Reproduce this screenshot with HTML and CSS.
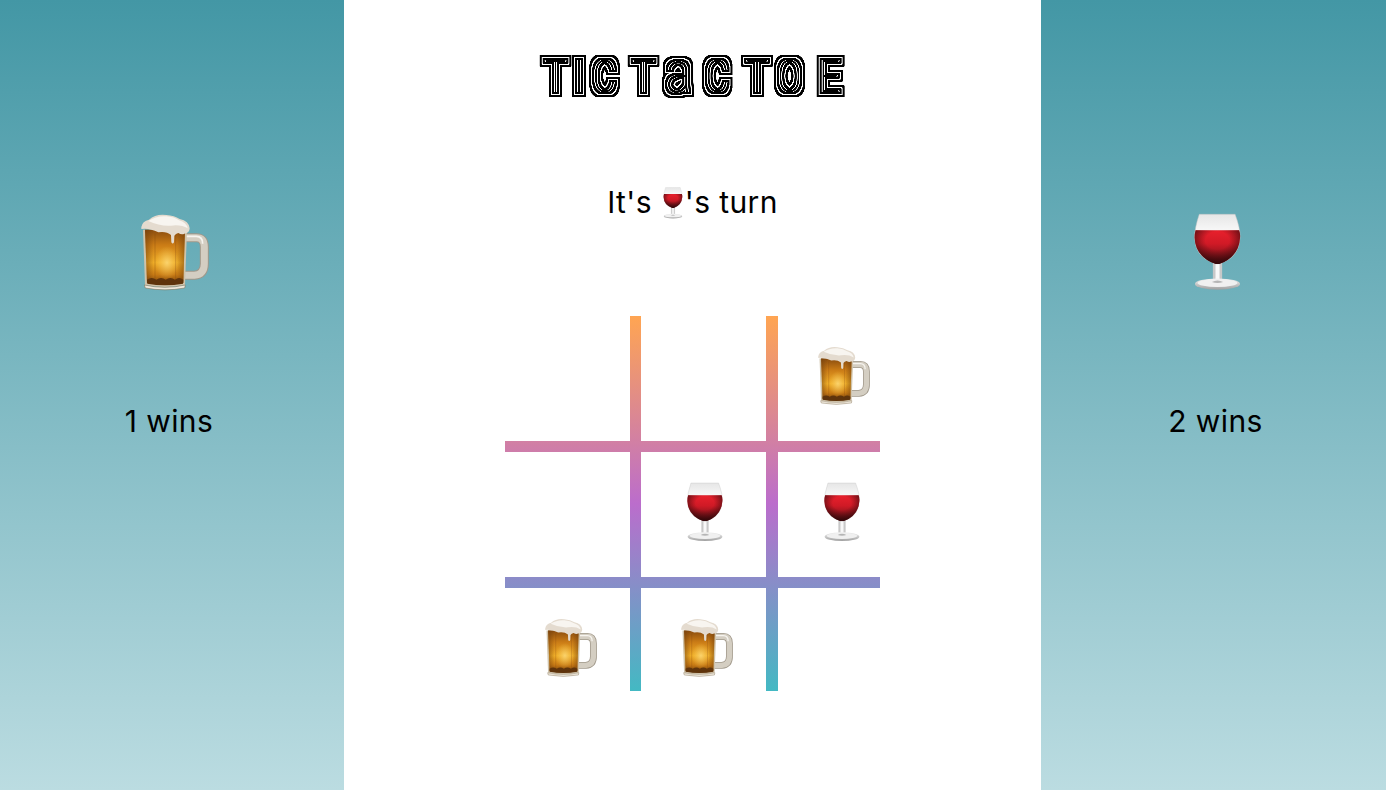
FILE: index.html
```html
<!DOCTYPE html>
<html lang="en">
<head>
    <meta charset="UTF-8">
    <meta name="viewport" content="width=device-width, initial-scale=1.0">
    <title>Tic Tac Toe</title>
    <link rel="stylesheet" href="styles.css">
</head>
<body>

<svg class="defs" width="0" height="0" aria-hidden="true">
    <defs>
        <linearGradient id="beer-fill" x1="0" y1="0" x2="0" y2="1">
            <stop offset="0" stop-color="#8a4c0e"/>
            <stop offset="0.28" stop-color="#cb7c16"/>
            <stop offset="0.6" stop-color="#f0ae28"/>
            <stop offset="0.82" stop-color="#c87a14"/>
            <stop offset="1" stop-color="#6e3c0c"/>
        </linearGradient>
        <radialGradient id="beer-glow" cx="0.55" cy="0.6" r="0.3">
            <stop offset="0" stop-color="#ffe38a" stop-opacity="0.7"/>
            <stop offset="1" stop-color="#ffd25a" stop-opacity="0"/>
        </radialGradient>
        <linearGradient id="beer-side" x1="0" y1="0" x2="1" y2="0">
            <stop offset="0" stop-color="#6d3c0c" stop-opacity="0.55"/>
            <stop offset="0.22" stop-color="#6d3c0c" stop-opacity="0"/>
            <stop offset="0.78" stop-color="#6d3c0c" stop-opacity="0"/>
            <stop offset="1" stop-color="#6d3c0c" stop-opacity="0.55"/>
        </linearGradient>
        <linearGradient id="wine-fill" x1="0" y1="0" x2="0" y2="1">
            <stop offset="0" stop-color="#e8202c"/>
            <stop offset="0.4" stop-color="#d01a26"/>
            <stop offset="1" stop-color="#5e1015"/>
        </linearGradient>
        <radialGradient id="wine-edge" cx="0.5" cy="0.3" r="0.65">
            <stop offset="0.4" stop-color="#400a0e" stop-opacity="0"/>
            <stop offset="1" stop-color="#300709" stop-opacity="0.9"/>
        </radialGradient>
        <linearGradient id="glass-top" x1="0" y1="0" x2="0" y2="1">
            <stop offset="0" stop-color="#e6e6e6"/>
            <stop offset="0.3" stop-color="#fbfbfb"/>
            <stop offset="0.6" stop-color="#dcdcdc"/>
        </linearGradient>
        <linearGradient id="glass-foot" x1="0" y1="0" x2="0" y2="1">
            <stop offset="0" stop-color="#f2f2f2"/>
            <stop offset="1" stop-color="#a0a0a0"/>
        </linearGradient>

        <filter id="rings" x="-5%" y="-30%" width="110%" height="160%" color-interpolation-filters="sRGB">
            <feComponentTransfer in="SourceAlpha" result="core">
                <feFuncA type="linear" slope="4"/>
            </feComponentTransfer>
            <feMorphology in="core" operator="dilate" radius="6 5" result="a"/>
            <feMorphology in="core" operator="dilate" radius="4 3" result="b"/>
            <feMorphology in="core" operator="dilate" radius="3 2" result="c"/>
            <feMorphology in="core" operator="dilate" radius="1 0" result="d"/>
            <feComposite in="a" in2="b" operator="out" result="outer"/>
            <feComposite in="c" in2="d" operator="out" result="inner"/>
            <feMerge>
                <feMergeNode in="outer"/>
                <feMergeNode in="inner"/>
                <feMergeNode in="core"/>
            </feMerge>
        </filter>

        <symbol id="beer" viewBox="60 40 204 230">
            <path d="M188 112H226Q250 112 250 140V190Q250 222 220 225H188" fill="none" stroke="#a0988a" stroke-width="27"/>
            <path d="M188 112H226Q250 112 250 140V190Q250 222 220 225H188" fill="none" stroke="#d4cec2" stroke-width="21"/>
            <path d="M192 108H226Q245 108 245 130" fill="none" stroke="#f6f4ef" stroke-width="5"/>
            <path d="M66 88H198L192 254Q132 266 72 254Z" fill="#cfc3ab"/>
            <path d="M72 88H192L187 248Q132 258 78 248Z" fill="url(#beer-fill)"/>
            <path d="M72 88H192L187 248Q132 258 78 248Z" fill="url(#beer-glow)"/>
            <path d="M72 88H192L187 248Q132 258 78 248Z" fill="url(#beer-side)"/>
            <path d="M102 100V240M164 100V240" stroke="#7a4310" stroke-opacity="0.3" stroke-width="3"/>
            <path d="M78 238Q92 228 106 238Q120 228 134 238Q148 228 162 238Q174 228 187 238L186 250Q132 260 79 250Z" fill="#5f340c"/>
            <path d="M70 254Q132 268 193 254L191 263Q132 274 73 263Z" fill="#efe9dd" stroke="#7c6a4c" stroke-width="1.5"/>
            <path d="M61 80Q64 62 84 58Q104 40 136 44Q160 46 176 56Q204 62 206 84Q206 98 190 100Q182 104 172 98Q164 100 160 106L159 126Q155 133 151 126L150 104Q136 92 112 96Q84 82 61 86Z" fill="#e4dbcf"/>
            <path d="M82 62Q106 46 136 48Q160 50 174 60Q196 66 200 84Q180 72 150 76Q116 78 82 62Z" fill="#f8f5f0"/>
        </symbol>

        <symbol id="wine" viewBox="75 38 140 235">
            <path d="M90 42H198Q214 84 213 112Q210 170 158 188V240H132V188Q78 170 76 112Q76 84 90 42Z" fill="url(#glass-top)" stroke="#c4c4c4" stroke-width="1.5"/>
            <path d="M79 90H210Q214 100 213 112Q210 170 150 192H140Q78 170 76 112Q76 100 79 90Z" fill="url(#wine-fill)"/>
            <path d="M79 90H210Q214 100 213 112Q210 170 150 192H140Q78 170 76 112Q76 100 79 90Z" fill="url(#wine-edge)"/>
            <path d="M132 192H158V240H132Z" fill="#c8c8c8"/>
            <path d="M139 192H151V240H139Z" fill="#f8f8f8"/>
            <ellipse cx="145" cy="252" rx="68" ry="17" fill="url(#glass-foot)"/>
            <ellipse cx="145" cy="249" rx="60" ry="12" fill="#f0f0f0"/>
            <path d="M128 246Q145 236 162 246Q145 252 128 246Z" fill="#b5b5b5"/>
        </symbol>
    </defs>
</svg>

<div class="game">
    <aside class="player player-beer">
        <svg class="player-mark beer-big"><use href="#beer"/></svg>
        <p class="score">1 wins</p>
    </aside>

    <main class="middle">
        <svg class="title" viewBox="0 0 320 60" role="img" aria-label="Tic Tac Toe">
            <g filter="url(#rings)">
                <text transform="scale(0.8 1)" x="15 52 75 0 125 167 216 0 267 306 358" y="47">Tic T<tspan class="title-a">a</tspan>c Toe</text>
            </g>
        </svg>

        <p class="status">It's <svg class="status-mark"><use href="#wine"/></svg>'s turn</p>

        <div class="board">
            <div class="cell"></div>
            <div class="cell"></div>
            <div class="cell"><svg class="mark beer-small"><use href="#beer"/></svg></div>
            <div class="cell"></div>
            <div class="cell"><svg class="mark wine-small"><use href="#wine"/></svg></div>
            <div class="cell"><svg class="mark wine-small"><use href="#wine"/></svg></div>
            <div class="cell"><svg class="mark beer-small"><use href="#beer"/></svg></div>
            <div class="cell"><svg class="mark beer-small"><use href="#beer"/></svg></div>
            <div class="cell"></div>
        </div>
    </main>

    <aside class="player player-wine">
        <svg class="player-mark wine-big"><use href="#wine"/></svg>
        <p class="score">2 wins</p>
    </aside>
</div>

</body>
</html>
```

FILE: styles.css
```css
html, body {
    height: 100%;
}

body {
    margin: 0;
    font-family: 'Inter', 'Liberation Sans', sans-serif;
    color: #000;
    background-color: #fff;
    overflow: hidden;
}

.defs {
    display: block;
    height: 0;
}

.game {
    display: flex;
    height: 790px;
}

.player {
    width: 344px;
    flex: none;
    display: flex;
    flex-direction: column;
    align-items: center;
    padding-top: 213px;
    box-sizing: border-box;
    background: linear-gradient(to bottom, #4397a5, #bbdce1);
}

.player-wine {
    width: 345px;
}

.player-mark {
    display: block;
}

.beer-big {
    width: 68px;
    height: 78px;
    margin-left: 5px;
}

.wine-big {
    width: 47px;
    height: 78px;
    margin-left: 8px;
}

.score {
    margin: 110px 0 0;
    font-size: 30px;
    line-height: 40px;
    letter-spacing: 0.4px;
}

.player-beer .score {
    margin-right: 6px;
}

.player-wine .score {
    margin-left: 4px;
}

.middle {
    flex: 1;
    display: flex;
    flex-direction: column;
    align-items: center;
}

.title {
    display: block;
    width: 320px;
    height: 60px;
    margin-top: 45px;
    font-family: 'Roboto', sans-serif;
    font-weight: 100;
    font-size: 44px;
    overflow: visible;
}

.title text {
    text-transform: uppercase;
}

.title-a {
    text-transform: none;
    font-size: 58px;
}

.status {
    margin: 77px 0 0;
    font-size: 30px;
    line-height: 40px;
    letter-spacing: 0.4px;
}

.status-mark {
    display: inline-block;
    width: 20px;
    height: 32px;
    margin: 0 2px;
    vertical-align: -6px;
}

.board {
    width: 375px;
    height: 375px;
    margin-top: 94px;
    display: grid;
    grid-template-columns: 125px 125px 1fr;
    grid-template-rows: 125px 125px 1fr;
    column-gap: 11.33px;
    row-gap: 11px;
    background: linear-gradient(to bottom, #ffa552, #bb6dcc 50%, #43b9c3);
}

.cell {
    background-color: #fff;
    padding-left: 40px;
    padding-top: 30px;
    box-sizing: border-box;
}

.mark {
    display: block;
}

.beer-small {
    width: 52px;
    height: 59px;
}

.wine-small {
    width: 36px;
    height: 60px;
    margin-left: 6px;
}
```
